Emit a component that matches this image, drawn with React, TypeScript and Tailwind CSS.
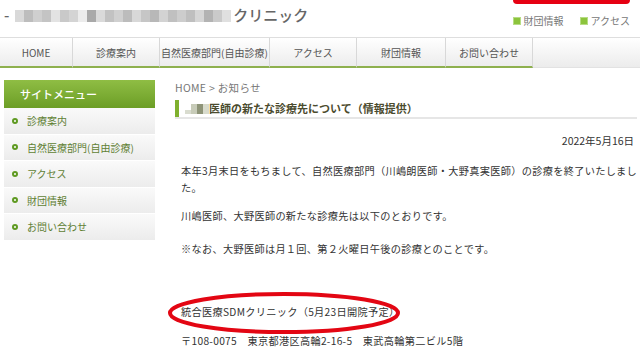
const navItems = [
  { label: "HOME", w: "w-[73px]" },
  { label: "診療案内", w: "w-[87px]" },
  { label: "自然医療部門(自由診療)", w: "w-[110px]" },
  { label: "アクセス", w: "w-[87px]" },
  { label: "財団情報", w: "w-[89px]" },
  { label: "お問い合わせ", w: "w-[87px]" },
];

const sideItems = ["診療案内", "自然医療部門(自由診療)", "アクセス", "財団情報", "お問い合わせ"];

// mosaic-like blur blocks standing in for the pixelated name
const Mosaic = ({ cells }: { cells: string[] }) => (
  <span className="inline-flex items-center h-[14px]">
    {cells.map((c, i) => (
      <span key={i} className={`inline-block h-[12px] w-[9px] ${c}`} />
    ))}
  </span>
);

const App = () => {
  return (
    <div
      className="relative w-[640px] h-[364px] overflow-hidden bg-white text-[#333]"
      style={{ fontFamily: '"Noto Sans CJK JP", "Noto Sans", sans-serif' }}
    >
      {/* Header */}
      <header className="flex justify-between h-[37px]">
        <div className="flex items-center pl-[4px] pb-[6px] text-[15px] text-[#666] font-medium">
          <span className="mr-[6px]">-</span>
          <Mosaic
            cells={[
              "bg-[#d9d9d9]", "bg-[#bdbdbd]", "bg-[#cfcfcf]", "bg-[#c4c4c4]", "bg-[#e3e3e3]", "bg-[#c9c9c9]",
              "bg-[#d4d4d4]", "bg-[#ececec]", "bg-[#a9a9a9]", "bg-[#dadada]", "bg-[#c2c2c2]", "bg-[#d0d0d0]",
              "bg-[#bcbcbc]", "bg-[#d8d8d8]", "bg-[#c6c6c6]", "bg-[#b8b8b8]", "bg-[#d3d3d3]", "bg-[#c0c0c0]",
              "bg-[#cdcdcd]", "bg-[#bfbfbf]", "bg-[#d6d6d6]", "bg-[#b3b3b3]", "bg-[#cacaca]", "bg-[#e0e0e0]",
            ]}
          />
          <span className="ml-[2px]">クリニック</span>
        </div>
        <div className="flex flex-col items-end pr-[10px]">
          <div className="w-[117px] h-[4px] rounded-b-full bg-[#e60012]" />
          <div className="flex items-center gap-[16px] mt-[9px] text-[10px] text-[#777]">
            <span className="flex items-center gap-[3px]">
              <span className="inline-block w-[8px] h-[8px] bg-[#8cc43c] border border-[#b7dc84]" />
              財団情報
            </span>
            <span className="flex items-center gap-[3px]">
              <span className="inline-block w-[8px] h-[8px] bg-[#8cc43c] border border-[#b7dc84]" />
              アクセス
            </span>
          </div>
        </div>
      </header>

      {/* Global nav */}
      <nav className="flex h-[31px] border-t border-[#dedede] bg-gradient-to-b from-white to-[#ebebeb]">
        {navItems.map((it) => (
          <div
            key={it.label}
            className={`${it.w} flex items-center justify-center border-r border-[#d8d8d8] border-b-[2px] border-b-[#8eb04e] text-[10px] text-[#555]`}
          >
            {it.label}
          </div>
        ))}
        <div className="flex-1 border-b border-[#e2e2e2]" />
      </nav>

      {/* Body */}
      <div className="flex mt-[12px]">
        {/* Sidebar */}
        <aside className="ml-[4px] w-[151px] shrink-0">
          <div className="h-[28px] flex items-center pl-[16px] bg-gradient-to-b from-[#8fbd44] to-[#6c9e25] text-white text-[11px] font-medium">
            サイトメニュー
          </div>
          {sideItems.map((s) => (
            <div
              key={s}
              className="h-[26.5px] flex items-center pl-[8px] gap-[9px] bg-gradient-to-b from-[#fafafa] to-[#ececec] border-b border-white text-[10px] text-[#5f7f33]"
            >
              <span className="inline-block w-[6px] h-[6px] rounded-full border-[2px] border-[#5f9a22] bg-white" />
              {s}
            </div>
          ))}
        </aside>

        {/* Main */}
        <main className="ml-[20px] flex-1 pr-[4px]">
          <div className="text-[10.5px] text-[#777] leading-[14px] pt-[1px] tracking-[0.3px]">HOME &gt; お知らせ</div>
          <div className="mt-[5px] flex items-stretch h-[19px] border-b-[2px] border-[#e6e6e6]">
            <span className="w-[4px] bg-[#7fb02e]" />
            <div className="ml-[6px] flex items-center text-[11px] font-bold text-[#4b4b2e]">
              <span className="inline-flex items-center">
                <span className="inline-block w-[6px] h-[4px] mt-[6px] bg-[#d9dccf]" />
                <span className="inline-block w-[6px] h-[10px] bg-[#c7cbb8]" />
                <span className="inline-block w-[6px] h-[10px] bg-[#8e9478]" />
                <span className="inline-block w-[6px] h-[10px] bg-[#d8dbcc]" />
              </span>
              医師の新たな診療先について（情報提供）
            </div>
          </div>

          <div className="mt-[15px] text-right pr-[3px] text-[10.5px] leading-[14px]">2022年5月16日</div>

          <div className="pl-[6px] text-[10.2px] leading-[17px] tracking-[0.3px] text-[#333] whitespace-nowrap">
            <p className="mt-[14px]">
              本年3月末日をもちまして、自然医療部門（川嶋朗医師・大野真実医師）の診療を終了いたしまし
              <br />
              た。
            </p>
            <p className="mt-[11px]">川嶋医師、大野医師の新たな診療先は以下のとおりです。</p>
            <p className="mt-[16px]">※なお、大野医師は月１回、第２火曜日午後の診療とのことです。</p>
            <p className="mt-[46px]">統合医療SDMクリニック（5月23日開院予定）</p>
            <p className="mt-[12px]">〒108-0075　東京都港区高輪2-16-5　東武高輪第二ビル5階</p>
          </div>
        </main>
      </div>

      {/* red annotation ellipse */}
      <svg className="absolute left-[166px] top-[290px] pointer-events-none" width="236" height="46" viewBox="0 0 236 46">
        <ellipse cx="118" cy="23" rx="114" ry="19" fill="none" stroke="#e30613" strokeWidth="4" />
      </svg>
    </div>
  );
};

export default App;
